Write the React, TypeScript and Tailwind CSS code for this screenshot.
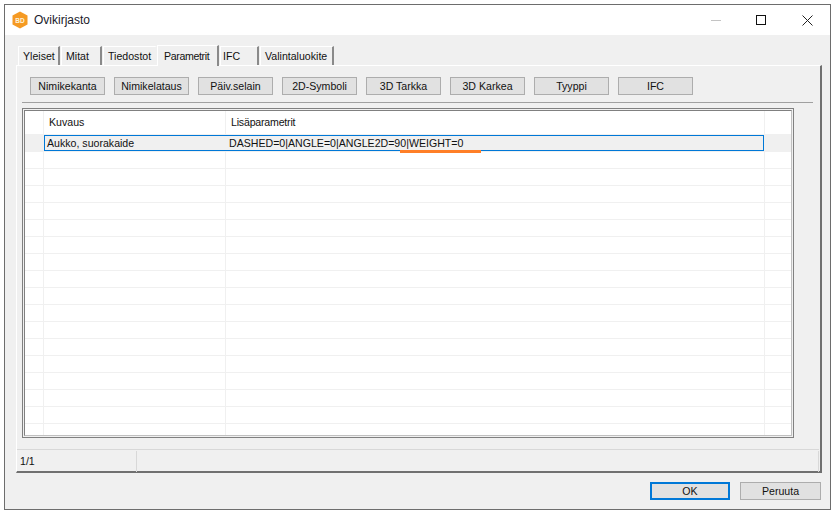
const tabs = [
  { label: "Yleiset", c: "w-[42px] pl-[4px] border-r-[#8a8a8a]" },
  { label: "Mitat", c: "w-[41px] ml-[1px] pl-[4px] border-r-[#8a8a8a]" },
  { label: "Tiedostot", c: "w-[54px] ml-[1px] pl-[4px] border-r-transparent" },
  { label: "Parametrit", c: "w-[62px] pl-[6px] tracking-[-0.35px] border-r-[#8a8a8a]" },
  { label: "IFC", c: "w-[39px] ml-[1px] pl-[2px] border-r-[#8a8a8a]" },
  { label: "Valintaluokite", c: "w-[74px] ml-[1px] pl-[4px] border-r-[#8a8a8a]" },
];
const tools = ["Nimikekanta", "Nimikelataus", "Päiv.selain", "2D-Symboli", "3D Tarkka", "3D Karkea", "Tyyppi", "IFC"];
const emptyRows = Array.from({ length: 17 }, (_, i) => i);

function Cells() {
  return (
    <div className="flex h-[17px] shrink-0 border-b border-[#f0f0f0]">
      <div className="w-[19px] shrink-0 border-r border-[#f0f0f0]" />
      <div className="w-[182px] shrink-0 border-r border-[#f0f0f0]" />
      <div className="w-[539px] shrink-0 border-r border-[#f0f0f0]" />
    </div>
  );
}

export default function App() {
  return (
    <div className="w-[840px] h-[514px] bg-white pt-1 pl-1 text-[10.6px] leading-[13px] text-[#111] font-['Liberation_Sans',Arial,sans-serif]">
      <div className="w-[827px] h-[506px] border border-[#6d6d6d] bg-[#f0f0f0] flex flex-col">
        {/* title bar */}
        <div className="h-[30px] bg-white flex items-center shrink-0">
          <svg width="16" height="18" viewBox="0 0 16 18" className="ml-[7px]">
            <polygon points="8,0.5 15.5,4.5 15.5,13.5 8,17.5 0.5,13.5 0.5,4.5" fill="#f59a23" />
            <text x="8" y="11.5" fontSize="6.5" fontWeight="700" textAnchor="middle" fill="#fff3dc" fontFamily="Liberation Sans">BD</text>
          </svg>
          <span className="ml-[6px] text-[12px] text-[#1a1a2a]">Ovikirjasto</span>
          <div className="ml-auto flex items-center">
            <div className="w-[10px] h-px bg-[#c4c4c4] mr-[35px]" />
            <div className="w-[10px] h-[10px] border border-[#111] mr-[36px]" />
            <svg width="11" height="11" viewBox="0 0 11 11" className="mr-[17px]">
              <path d="M0.5 0.5L10.5 10.5M10.5 0.5L0.5 10.5" stroke="#222" strokeWidth="1" />
            </svg>
          </div>
        </div>

        {/* tabs */}
        <div className="flex items-end h-[30px] pl-[13px] shrink-0">
          {tabs.map((t) => {
            const active = t.label === "Parametrit";
            return (
              <div
                key={t.label}
                className={`${t.c} ${active ? "h-[21px] bg-[#f0f0f0] -mb-px z-10" : "h-[19px]"} flex items-center border-t border-l border-t-white border-l-white border-r-2 whitespace-nowrap overflow-hidden`}
              >
                {t.label}
              </div>
            );
          })}
        </div>

        {/* panel */}
        <div className="ml-[11px] w-[806px] h-[408px] border-t border-l border-white border-r-2 border-r-[#707070] border-b-2 border-b-[#707070] flex flex-col shrink-0">
          <div className="flex gap-[9px] pl-[13px] pt-[11px] shrink-0">
            {tools.map((b) => (
              <div key={b} className="w-[75px] h-[18px] bg-[#e1e1e1] border border-[#adadad] flex items-center justify-center">
                {b}
              </div>
            ))}
          </div>
          <div className="ml-[5px] mr-[7px] mt-[7px] h-px bg-[#a0a0a0] shrink-0" />

          {/* grid */}
          <div className="ml-[5px] mt-[5px] w-[772px] h-[330px] border border-[#808080] p-px shrink-0">
            <div className="h-full border border-[#808080] border-r-[#c0c0c0] border-b-[#c0c0c0] bg-white overflow-hidden flex flex-col">
              <div className="flex h-[24px] border-b border-[#f0f0f0] shrink-0">
                <div className="w-[19px] shrink-0 border-r border-[#f0f0f0]" />
                <div className="w-[182px] shrink-0 border-r border-[#f0f0f0] pl-[5px] pt-[5px]">Kuvaus</div>
                <div className="w-[539px] shrink-0 border-r border-[#f0f0f0] pl-[5px] pt-[5px] tracking-[-0.2px]">Lisäparametrit</div>
              </div>
              <div className="flex h-[17px] bg-[#f0f0f0] shrink-0 relative">
                <div className="w-[19px] shrink-0 bg-[#f0f0f0]" />
                <div className="w-[720px] h-[16px] shrink-0 border border-[#0078d7] flex items-center">
                  <div className="w-[181px] pl-[2px] shrink-0">Aukko, suorakaide</div>
                  <div className="pl-[3px] whitespace-nowrap">DASHED=0|ANGLE=0|ANGLE2D=90|WEIGHT=0</div>
                </div>
                <div className="absolute left-[375px] top-[15px] w-[81px] h-[3px] bg-[#ff7f27] z-10" />
              </div>
              {emptyRows.map((r) => (
                <Cells key={r} />
              ))}
            </div>
          </div>

          {/* status bar */}
          <div className="mt-[11px] border-t border-[#d8d8d8] h-[24px] flex justify-between shrink-0 mr-[1px]">
            <div className="w-[120px] pl-[3px] mt-[1px] h-[21px] flex items-center border-r border-[#d8d8d8]">1/1</div>
            <div className="w-px h-[21px] mt-[1px] bg-[#d8d8d8]" />
          </div>
        </div>

        {/* footer */}
        <div className="flex justify-end gap-[10px] pr-[9px] pt-[9px]">
          <div className="w-[80px] h-[18px] bg-[#e1e1e1] border-2 border-[#0078d7] flex items-center justify-center">OK</div>
          <div className="w-[81px] h-[18px] bg-[#e1e1e1] border border-[#adadad] flex items-center justify-center">Peruuta</div>
        </div>
      </div>
    </div>
  );
}
